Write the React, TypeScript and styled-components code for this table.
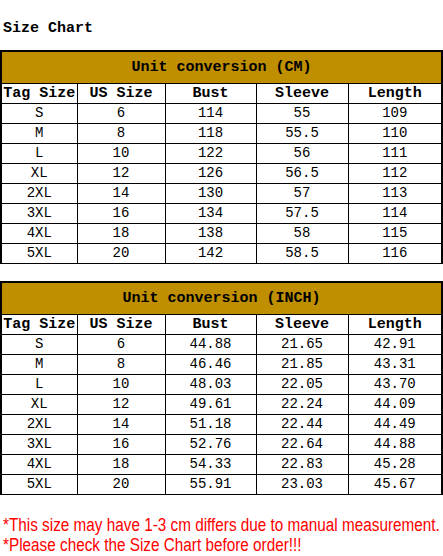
import React from "react";
import styled, { createGlobalStyle } from "styled-components";

const Global = createGlobalStyle`
  html, body { margin: 0; padding: 0; background: #fff; }
  body { font-family: "Liberation Mono", "DejaVu Sans Mono", monospace; color: #000; }
`;

const Page = styled.div`
  width: 443px;
  display: flex;
  flex-direction: column;
`;

const Title = styled.h1`
  margin: 0;
  padding: 19px 0 0 3px;
  height: 31px;
  font-family: "Liberation Mono", monospace;
  font-weight: 700;
  font-size: 15px;
  line-height: 20px;
`;

const Table = styled.table<{ $gap?: number }>`
  border-collapse: collapse;
  table-layout: fixed;
  width: 442px;
  margin-top: ${(p) => p.$gap ?? 0}px;
  border-top: 2px solid #000;
  border-left: 2px solid #000;
  border-right: 2px solid #000;
  border-bottom: 1px solid #000;
`;

const Caption = styled.th`
  background: #bf8f00;
  height: 31px;
  padding: 0;
  border-bottom: 1px solid #000;
  font-family: "Liberation Mono", monospace;
  font-weight: 700;
  font-size: 15px;
  text-align: center;
  vertical-align: middle;
`;

const HeadCell = styled.th`
  height: 19px;
  padding: 0;
  border: 1px solid #000;
  font-family: "Liberation Mono", monospace;
  font-weight: 700;
  font-size: 15px;
  line-height: 19px;
  text-align: center;
  white-space: nowrap;
  overflow: hidden;
`;

const Cell = styled.td`
  height: 19px;
  padding: 0;
  border: 1px solid #000;
  font-family: "Liberation Mono", monospace;
  font-weight: 400;
  font-size: 14px;
  line-height: 19px;
  text-align: center;
  white-space: nowrap;
`;

const Notes = styled.div`
  margin-top: 20px;
  padding-left: 3px;
  display: flex;
  flex-direction: column;
  align-items: flex-start;
  overflow: hidden;
  color: #ff0000;
  font-family: "Liberation Sans", Arial, sans-serif;
  font-size: 18px;
  line-height: 20px;
  white-space: nowrap;
`;

const Note = styled.span`
  display: block;
  transform: scaleX(0.85);
  transform-origin: left center;
`;

const widths = [76, 88, 91, 92, 94];
const heads = ["Tag Size", "US Size", "Bust", "Sleeve", "Length"];
const sizes = ["S", "M", "L", "XL", "2XL", "3XL", "4XL", "5XL"];
const us = ["6", "8", "10", "12", "14", "16", "18", "20"];

const cm = [
  ["114", "55", "109"],
  ["118", "55.5", "110"],
  ["122", "56", "111"],
  ["126", "56.5", "112"],
  ["130", "57", "113"],
  ["134", "57.5", "114"],
  ["138", "58", "115"],
  ["142", "58.5", "116"],
];

const inch = [
  ["44.88", "21.65", "42.91"],
  ["46.46", "21.85", "43.31"],
  ["48.03", "22.05", "43.70"],
  ["49.61", "22.24", "44.09"],
  ["51.18", "22.44", "44.49"],
  ["52.76", "22.64", "44.88"],
  ["54.33", "22.83", "45.28"],
  ["55.91", "23.03", "45.67"],
];

function SizeTable({ title, data, gap }: { title: string; data: string[][]; gap?: number }) {
  return (
    <Table $gap={gap}>
      <colgroup>
        {widths.map((w, i) => (
          <col key={i} style={{ width: w }} />
        ))}
      </colgroup>
      <thead>
        <tr>
          <Caption colSpan={5}>{title}</Caption>
        </tr>
        <tr>
          {heads.map((h) => (
            <HeadCell key={h}>{h}</HeadCell>
          ))}
        </tr>
      </thead>
      <tbody>
        {data.map((row, i) => (
          <tr key={i}>
            <Cell>{sizes[i]}</Cell>
            <Cell>{us[i]}</Cell>
            {row.map((v, j) => (
              <Cell key={j}>{v}</Cell>
            ))}
          </tr>
        ))}
      </tbody>
    </Table>
  );
}

export default function App() {
  return (
    <Page>
      <Global />
      <Title>Size Chart</Title>
      <SizeTable title="Unit conversion (CM)" data={cm} />
      <SizeTable title="Unit conversion (INCH)" data={inch} gap={17} />
      <Notes>
        <Note>*This size may have 1-3 cm differs due to manual measurement.</Note>
        <Note>*Please check the Size Chart before order!!!</Note>
      </Notes>
    </Page>
  );
}
